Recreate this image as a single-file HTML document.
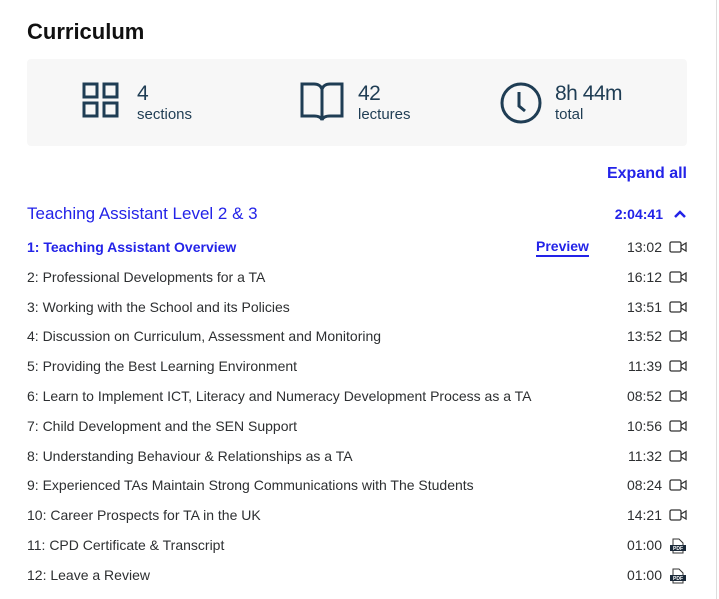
<!DOCTYPE html><html><head><style>
body{margin:0;width:719px;height:599px;background:#fff;font-family:"Liberation Sans",sans-serif;color:#2d2f31;position:relative;overflow:hidden}
.rb{position:absolute;left:716px;top:0;width:1px;height:599px;background:#ddd}
h1{position:absolute;left:27px;top:19px;margin:0;font-size:22px;font-weight:bold;color:#111}
.box{position:absolute;left:27px;top:59px;width:660px;height:87px;background:#f7f7f7;border-radius:4px}
.st{position:absolute;top:22px;color:#1f3d54}
.st .n{position:absolute;font-size:21px;top:1px;white-space:nowrap;letter-spacing:-0.5px}
.st .l{position:absolute;font-size:15px;top:25px;white-space:nowrap}
.blue{color:#2323e8}
.row{position:absolute;left:27px;width:660px;height:20px;font-size:14px;line-height:20px}
.row .t{position:absolute;right:25px;top:0}
.row svg{position:absolute;right:0;top:3px}
</style></head><body>
<div class="rb"></div>
<h1>Curriculum</h1>
<div class="box">
 <div class="st" style="left:55px"><svg width="40" height="40" viewBox="0 0 40 40" fill="none" stroke="#1f3d54" stroke-width="3"><rect x="2" y="3" width="13" height="13"/><rect x="22" y="3" width="13" height="13"/><rect x="2" y="22" width="13" height="13"/><rect x="22" y="22" width="13" height="13"/></svg><span class="n" style="left:55px">4</span><span class="l" style="left:55px">sections</span></div>
 <div class="st" style="left:273px"><svg width="44" height="42" viewBox="0 0 44 42" fill="none" stroke="#1f3d54" stroke-width="3"><path d="M2 3h12c4 0 7 2 8 5v31c-1-3-4-4-8-4H2z"/><path d="M42 3H30c-4 0-7 2-8 5v31c1-3 4-4 8-4h12z"/></svg><span class="n" style="left:58px">42</span><span class="l" style="left:58px">lectures</span></div>
 <div class="st" style="left:472px"><svg width="44" height="44" viewBox="0 0 44 44" fill="none" stroke="#1f3d54" stroke-width="3"><circle cx="22" cy="22" r="19"/><path d="M20 11v14l6 5"/></svg><span class="n" style="left:56px">8h 44m</span><span class="l" style="left:56px">total</span></div>
</div>
<div class="blue" style="position:absolute;right:32px;top:165px;font-size:16px;font-weight:bold">Expand all</div>
<div class="blue" style="position:absolute;left:27px;top:204px;font-size:17px">Teaching Assistant Level 2 &amp; 3</div>
<div class="blue" style="position:absolute;right:56px;top:206px;font-size:14px;font-weight:bold">2:04:41</div>
<svg style="position:absolute;left:673px;top:209px" width="14" height="10" viewBox="0 0 14 10"><path d="M2 8l5-5 5 5" fill="none" stroke="#2323e8" stroke-width="2.5"/></svg>
<div class="row blue" style="top:237px;font-weight:bold">1: Teaching Assistant Overview<span style="position:absolute;left:509px;border-bottom:2px solid #2323e8;line-height:18px">Preview</span><span class="t" style="color:#2d2f31;font-weight:normal">13:02</span><svg width="18" height="14" viewBox="0 0 18 14" fill="none" stroke="#333" stroke-width="1.3"><rect x="1" y="2" width="11" height="10" rx="1.5"/><path d="M12 6l5-3v8l-5-3"/></svg></div>
<div id="rows"></div>
<script>
var d=[["2: Professional Developments for a TA","16:12"],["3: Working with the School and its Policies","13:51"],["4: Discussion on Curriculum, Assessment and Monitoring","13:52"],["5: Providing the Best Learning Environment","11:39"],["6: Learn to Implement ICT, Literacy and Numeracy Development Process as a TA","08:52"],["7: Child Development and the SEN Support","10:56"],["8: Understanding Behaviour & Relationships as a TA","11:32"],["9: Experienced TAs Maintain Strong Communications with The Students","08:24"],["10: Career Prospects for TA in the UK","14:21"],["11: CPD Certificate & Transcript","01:00",1],["12: Leave a Review","01:00",1]];
var vid='<svg width="18" height="14" viewBox="0 0 18 14" fill="none" stroke="#333" stroke-width="1.3"><rect x="1" y="2" width="11" height="10" rx="1.5"/><path d="M12 6l5-3v8l-5-3"/></svg>';
var pdf='<svg width="18" height="16" viewBox="0 0 18 16"><path d="M4 1h6l4 4v10H4z" fill="#fff" stroke="#333"/><rect x="1" y="7" width="16" height="6" fill="#1b2a3a"/><text x="9" y="12" font-size="5" font-weight="bold" fill="#fff" text-anchor="middle" font-family="Liberation Sans">PDF</text></svg>';
var h='';d.forEach(function(r,i){var y=237+(i+1)*29.8;h+='<div class="row" style="top:'+y+'px">'+r[0].replace('&','&amp;')+'<span class="t">'+r[1]+'</span>'+(r[2]?pdf:vid)+'</div>';});
document.getElementById('rows').innerHTML=h;
</script>
</body></html>
